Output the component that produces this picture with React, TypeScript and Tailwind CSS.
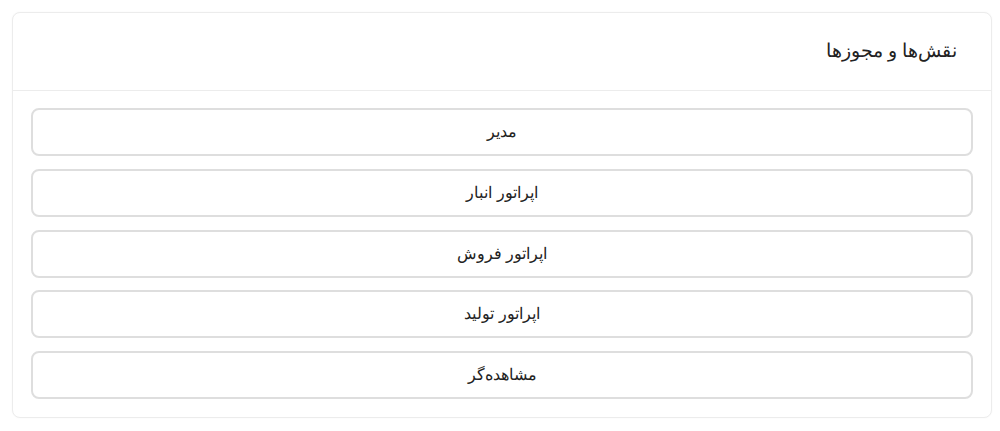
const roles = ["مدیر", "اپراتور انبار", "اپراتور فروش", "اپراتور تولید", "مشاهده‌گر"];

export default function App() {
  return (
    <div dir="rtl" className="min-h-screen bg-white pt-3 pl-3 pr-2 font-['Noto_Sans',sans-serif] text-[#222]">
      <div className="rounded-lg border border-[#ececec] bg-white shadow-[0_0_2px_rgba(0,0,0,0.04)]">
        <div className="flex h-[78px] items-center border-b border-[#ececec] pr-[34px] pb-[3px]">
          <h2 className="text-[18.5px] font-normal">نقش‌ها و مجوزها</h2>
        </div>
        <div className="flex flex-col gap-[12.75px] px-[18px] pt-[17px] pb-[18px]">
          {roles.map((role) => (
            <button
              key={role}
              className="h-[48px] w-full rounded-lg border-2 border-[#dedede] bg-white pb-[2px] text-[16px] text-[#222]"
            >
              {role}
            </button>
          ))}
        </div>
      </div>
    </div>
  );
}
